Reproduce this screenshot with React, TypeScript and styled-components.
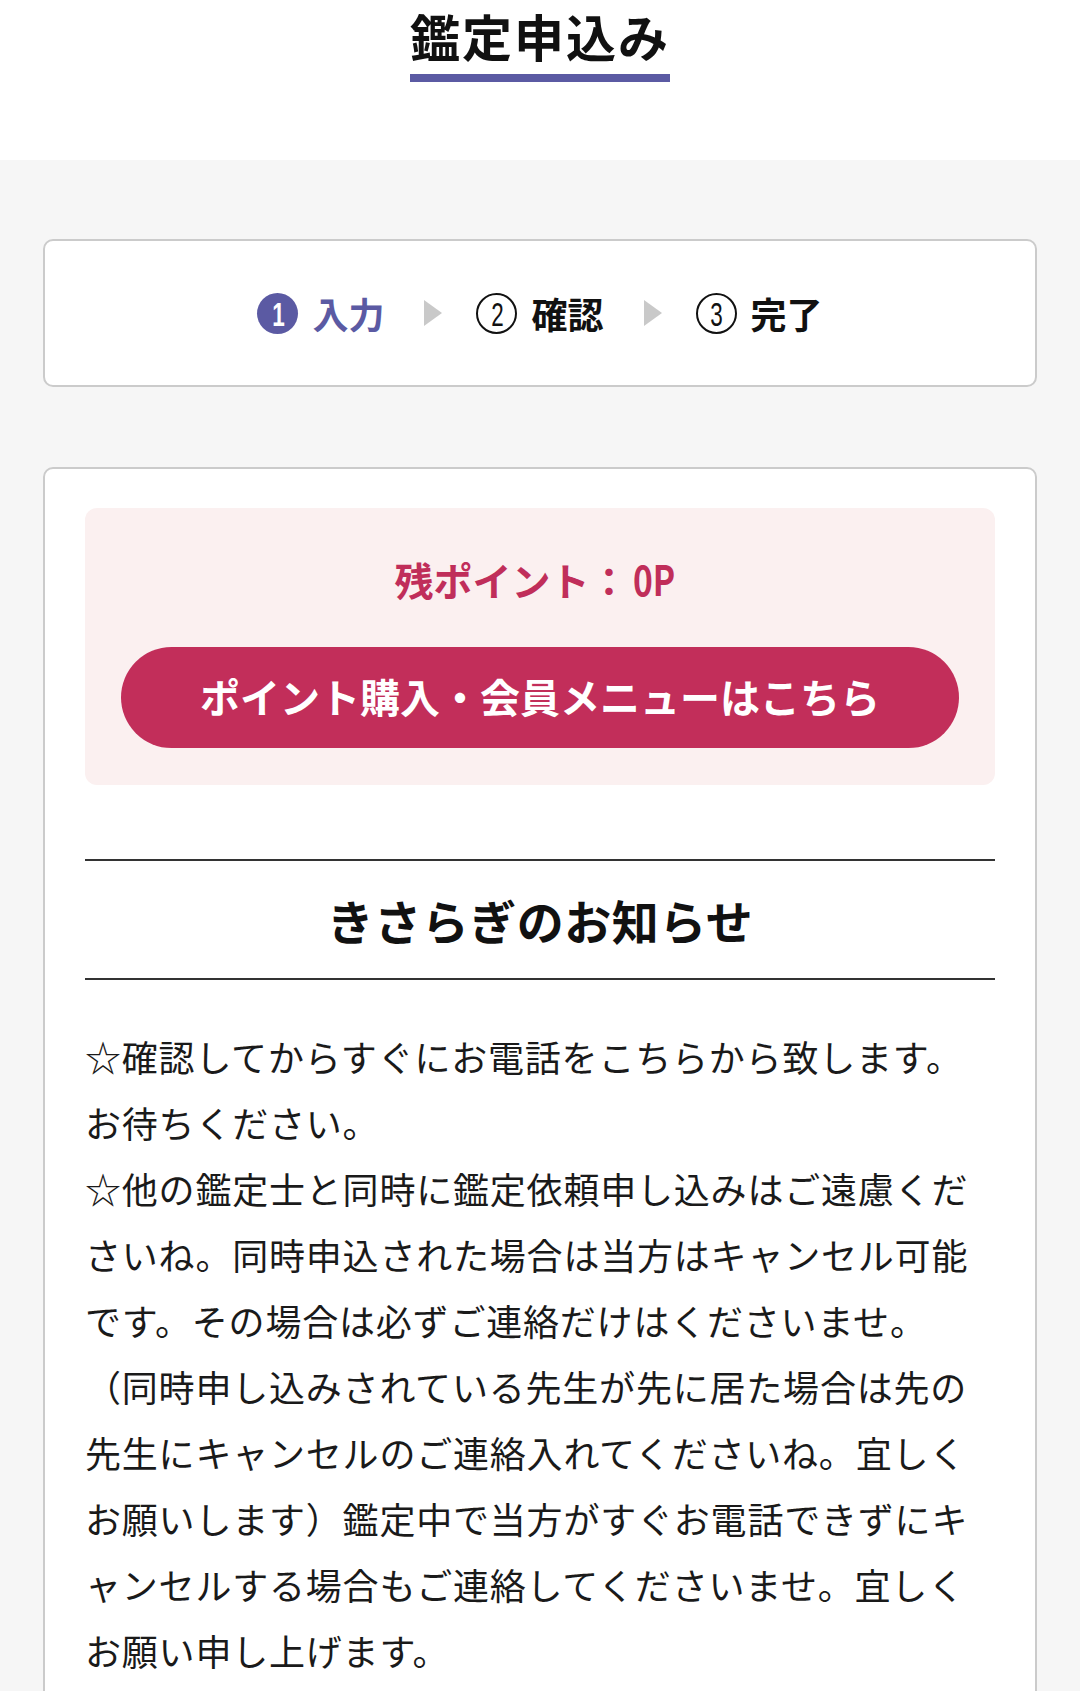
import React from "react";
import styled, { createGlobalStyle } from "styled-components";

const GlobalStyle = createGlobalStyle`
  html, body { margin: 0; padding: 0; }
  body {
    background: #f6f6f6;
    font-family: "Noto Sans CJK JP", "Noto Sans", sans-serif;
    color: #1a1a1a;
  }
  * { box-sizing: border-box; }
`;

const Page = styled.div`
  min-height: 1691px;
  background: #f6f6f6;
`;

const Header = styled.header`
  background: #ffffff;
  height: 160px;
  display: flex;
  justify-content: center;
  align-items: flex-start;
  padding-top: 4px;
`;

const Title = styled.h1`
  margin: 0;
  font-size: 50px;
  font-weight: 700;
  line-height: 62px;
  letter-spacing: 2px;
  padding-bottom: 8px;
  border-bottom: 8px solid #5b5aa3;
  color: #111;
`;

const Main = styled.main`
  padding: 79px 43px 0;
  display: flex;
  flex-direction: column;
  gap: 80px;
`;

const Panel = styled.section`
  background: #ffffff;
  border: 2px solid #cbcbcb;
  border-radius: 10px;
`;

const StepPanel = styled(Panel)`
  height: 148px;
  display: flex;
  justify-content: center;
  align-items: center;
`;

const Step = styled.div<{ $active?: boolean }>`
  display: flex;
  align-items: center;
  gap: 14px;
  font-size: 36px;
  font-weight: 700;
  line-height: 1;
  color: ${(p) => (p.$active ? "#5b5aa3" : "#111")};
`;

const StepNum = styled.span<{ $active?: boolean }>`
  width: 41px;
  height: 41px;
  border-radius: 50%;
  display: inline-flex;
  align-items: center;
  justify-content: center;
  font-family: "Liberation Sans", "Noto Sans", sans-serif;
  font-size: 34px;
  line-height: 1;
  font-weight: ${(p) => (p.$active ? 700 : 400)};
  background: ${(p) => (p.$active ? "#5b5aa3" : "#fff")};
  color: ${(p) => (p.$active ? "#fff" : "#111")};
  border: ${(p) => (p.$active ? "none" : "2.5px solid #111")};
  & > span {
    display: inline-block;
    transform: scaleX(0.66);
    margin-top: 1px;
  }
`;

const Arrow = styled.span`
  width: 0;
  height: 0;
  border-top: 13px solid transparent;
  border-bottom: 13px solid transparent;
  border-left: 18px solid #c9c9c9;
  margin: 0 34px 0 40px;
`;

const ContentPanel = styled(Panel)`
  padding: 39px 40px 80px;
  border-bottom-left-radius: 0;
  border-bottom-right-radius: 0;
`;

const PointBox = styled.div`
  background: #fbf0f0;
  border-radius: 12px;
  padding: 40px 36px 37px;
  display: flex;
  flex-direction: column;
  align-items: center;
  gap: 38px;
`;

const PointText = styled.p`
  margin: 0;
  font-size: 39px;
  font-weight: 700;
  line-height: 60px;
  color: #c02e5a;
`;

const Narrow = styled.span`
  display: inline-block;
  font-size: 42px;
  transform: scaleX(0.8);
  transform-origin: left center;
  margin-left: 4px;
`;

const MenuButton = styled.button`
  width: 100%;
  height: 101px;
  border: none;
  border-radius: 51px;
  background: #c22e5a;
  color: #fff;
  font-family: "Noto Sans CJK JP", sans-serif;
  font-size: 40px;
  font-weight: 700;
  letter-spacing: 0;
  cursor: pointer;
  padding: 0 0 4px;
`;

const NoticeHeading = styled.h2`
  margin: 74px 0 0;
  border-top: 2px solid #333;
  border-bottom: 2px solid #333;
  height: 121px;
  display: flex;
  align-items: center;
  justify-content: center;
  font-size: 47px;
  font-weight: 700;
  color: #111;
  letter-spacing: 0.5px;
`;

const NoticeBody = styled.p`
  margin: 43px 0 0;
  font-size: 36px;
  line-height: 66px;
  letter-spacing: 0.8px;
  font-weight: 400;
  color: #1a1a1a;
  white-space: nowrap;
`;

const lines = [
  "☆確認してからすぐにお電話をこちらから致します。",
  "お待ちください。",
  "☆他の鑑定士と同時に鑑定依頼申し込みはご遠慮くだ",
  "さいね。同時申込された場合は当方はキャンセル可能",
  "です。その場合は必ずご連絡だけはくださいませ。",
  "（同時申し込みされている先生が先に居た場合は先の",
  "先生にキャンセルのご連絡入れてくださいね。宜しく",
  "お願いします）鑑定中で当方がすぐお電話できずにキ",
  "ャンセルする場合もご連絡してくださいませ。宜しく",
  "お願い申し上げます。",
];

export default function App() {
  return (
    <>
      <GlobalStyle />
      <Page>
        <Header>
          <Title>鑑定申込み</Title>
        </Header>
        <Main>
          <StepPanel>
            <Step $active>
              <StepNum $active>
                <span>1</span>
              </StepNum>
              入力
            </Step>
            <Arrow />
            <Step>
              <StepNum>
                <span>2</span>
              </StepNum>
              確認
            </Step>
            <Arrow />
            <Step>
              <StepNum>
                <span>3</span>
              </StepNum>
              完了
            </Step>
          </StepPanel>
          <ContentPanel>
            <PointBox>
              <PointText>
                残ポイント：<Narrow>0P</Narrow>
              </PointText>
              <MenuButton type="button">ポイント購入・会員メニューはこちら</MenuButton>
            </PointBox>
            <NoticeHeading>きさらぎのお知らせ</NoticeHeading>
            <NoticeBody>
              {lines.map((l, i) => (
                <React.Fragment key={i}>
                  {l}
                  {i < lines.length - 1 && <br />}
                </React.Fragment>
              ))}
            </NoticeBody>
          </ContentPanel>
        </Main>
      </Page>
    </>
  );
}
